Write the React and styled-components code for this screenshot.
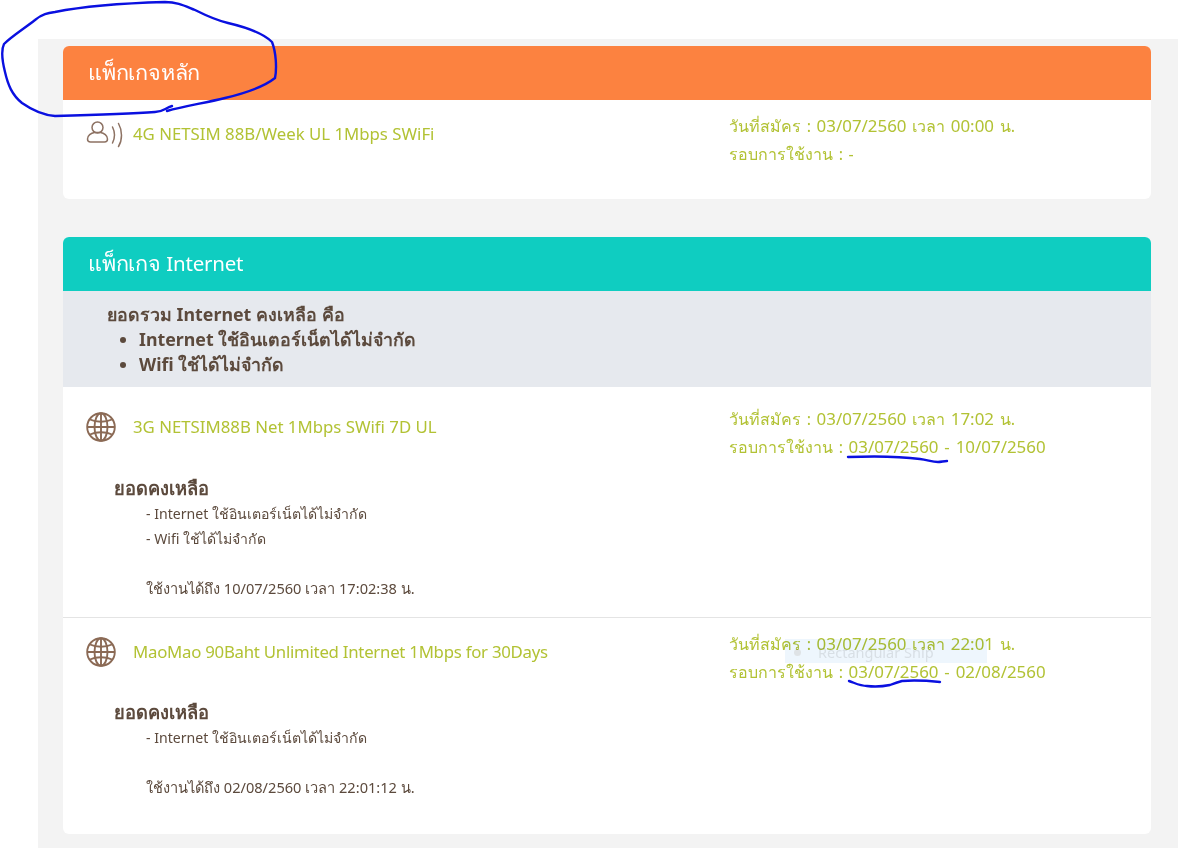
import React from "react";
import styled, { createGlobalStyle } from "styled-components";

const GlobalStyle = createGlobalStyle`
  html, body {
    margin: 0;
    background: #fff;
  }
  body {
    font-family: "Noto Sans", "Open Sans", "DejaVu Sans", "Noto Sans CJK SC", sans-serif;
    color: #5c4a3d;
  }
`;

const UserWaveIcon = () => (
  <svg width="38" height="28" viewBox="0 0 38 28" fill="none" stroke="#8d7263" strokeWidth="1.5" strokeLinecap="round">
    <circle cx="11.500" cy="7.500" r="5.500" />
    <path d="M1.500 19c0-3.500 3.500-6 7-6.500h6c3.500 .5 7 3 7 6.500c0 2-1 3-3 3h-14c-2 0-3-1-3-3z" />
    <path d="M26.500 7c2.500 5 2.500 11 0 16" />
    <path d="M32.500 3.500c4 7 4 16.500 0 23" />
  </svg>
);

const GlobeIcon = () => (
  <svg width="30" height="30" viewBox="0 0 30 30" fill="none" stroke="#8b6a55" strokeWidth="1.9">
    <circle cx="15" cy="15" r="13.800" />
    <ellipse cx="15" cy="15" rx="6.500" ry="13.800" />
    <path d="M15 1v28M1.500 15h27" />
    <path d="M4 7.500c6 3 16 3 22 0M4 22.500c6-3 16-3 22 0" />
  </svg>
);

const packages = [
  {
    name: "3G NETSIM88B Net 1Mbps SWifi 7D UL",
    time: "17:02",
    periodStart: "03/07/2560",
    periodEnd: "10/07/2560",
    lines: ["- Internet ใช้อินเตอร์เน็ตได้ไม่จำกัด", "- Wifi ใช้ได้ไม่จำกัด"],
    until: "ใช้งานได้ถึง 10/07/2560 เวลา 17:02:38 น.",
    top: 18,
    remainGap: 15,
    height: 230,
  },
  {
    name: "MaoMao 90Baht Unlimited Internet 1Mbps for 30Days",
    tight: true,
    time: "22:01",
    periodStart: "03/07/2560",
    periodEnd: "02/08/2560",
    lines: ["- Internet ใช้อินเตอร์เน็ตได้ไม่จำกัด"],
    until: "ใช้งานได้ถึง 02/08/2560 เวลา 22:01:12 น.",
    top: 12,
    remainGap: 14,
    height: 217,
  },
];

const AppliedLine = ({ time }) => (
  <div>
    วันที่สมัคร : <Num>03/07/2560</Num> เวลา <Num>{time}</Num> น.
  </div>
);

const App = () => {
  return (
    <>
      <GlobalStyle />
      <Page>
        <Panel>
          <Card>
            <CardHeader $color="#fc8240">แพ็กเกจหลัก</CardHeader>
            <MainRow>
              <NameCell>
                <IconSlot>
                  <UserWaveIcon />
                </IconSlot>
                <PackageName>4G NETSIM 88B/Week UL 1Mbps SWiFi</PackageName>
              </NameCell>
              <DateCell>
                <AppliedLine time="00:00" />
                <div>รอบการใช้งาน : -</div>
              </DateCell>
            </MainRow>
          </Card>

          <Card>
            <CardHeader $color="#0fcdc1">
              แพ็กเกจ <HeaderLatin>Internet</HeaderLatin>
            </CardHeader>
            <Summary>
              <div>ยอดรวม Internet คงเหลือ คือ</div>
              <SummaryList>
                <li>Internet ใช้อินเตอร์เน็ตได้ไม่จำกัด</li>
                <li>Wifi ใช้ได้ไม่จำกัด</li>
              </SummaryList>
            </Summary>
            {packages.map((item) => (
              <PackageRow key={item.name} $top={item.top} $height={item.height}>
                <PackageTop>
                  <NameCell>
                    <IconSlot>
                      <GlobeIcon />
                    </IconSlot>
                    <PackageName $tight={item.tight}>{item.name}</PackageName>
                  </NameCell>
                  <DateCell>
                    <AppliedLine time={item.time} />
                    <div>
                      รอบการใช้งาน : <Num>{item.periodStart} - {item.periodEnd}</Num>
                    </div>
                  </DateCell>
                </PackageTop>
                <Remain $gap={item.remainGap}>
                  <RemainTitle>ยอดคงเหลือ</RemainTitle>
                  {item.lines.map((line) => (
                    <RemainLine key={line}>{line}</RemainLine>
                  ))}
                  <Until>{item.until}</Until>
                </Remain>
              </PackageRow>
            ))}
          </Card>
        </Panel>

        <SnipGhost>
          <SnipDot />
          Rectangular Snip
        </SnipGhost>

        <Scribbles width="1178" height="848" viewBox="0 0 1178 848" fill="none" stroke="#0a10e0" strokeLinecap="round" strokeLinejoin="round">
          <path
            strokeWidth="2.400"
            d="M172 106C165 108 163 112 155 112C130 114 95 115 55 116C42 115 32 110 22 103C12 95 8 85 5 72C2 60 1 50 4 44C12 36 25 28 35 20C42 14 48 13 55 12C85 6 130 3 165 2C178 2 185 6 195 10C205 15 215 20 228 23C245 27 262 32 272 42C276 52 277 68 275 78C265 86 250 92 225 98C205 103 185 106 167 111"
          />
          <path strokeWidth="2.400" d="M848 457C875 456 905 457 920 459C928 460 932 462 938 462C941 462 944 461 947 461" />
          <path strokeWidth="2.400" d="M849 681C855 683 860 686 867 686C875 687 885 686 890 685C895 683 898 682 902 681C915 680 930 681 940 682" />
        </Scribbles>
      </Page>
    </>
  );
};

const Page = styled.div`
  position: relative;
  width: 1178px;
  height: 848px;
  overflow: hidden;
  padding-top: 39px;
  box-sizing: border-box;
  background: #fff;
`;

const Panel = styled.main`
  margin-left: 38px;
  height: 809px;
  background: #f3f3f3;
  padding: 7px 27px 0 25px;
  box-sizing: border-box;
  display: flex;
  flex-direction: column;
  gap: 38px;
`;

const Card = styled.section`
  background: #fff;
  border-radius: 6px;
  overflow: hidden;
`;

const CardHeader = styled.h2`
  margin: 0;
  height: 54px;
  padding-left: 25px;
  background: ${(props) => props.$color};
  color: #fff;
  font-size: 21.600px;
  font-weight: 400;
  line-height: 52px;
  letter-spacing: -0.2px;
`;

const HeaderLatin = styled.span`
  font-size: 20.500px;
`;

const MainRow = styled.div`
  height: 99px;
  display: flex;
  justify-content: space-between;
  padding: 12px 0 0 23px;
  box-sizing: border-box;
`;

const NameCell = styled.div`
  display: flex;
  align-items: center;
  height: 44px;
  gap: 9px;
`;

const IconSlot = styled.span`
  width: 38px;
  display: flex;
  align-items: center;
`;

const PackageName = styled.span`
  color: #b2c234;
  font-size: 16.800px;
  padding-bottom: 2px;
  letter-spacing: ${(props) => (props.$tight ? "-0.25px" : "0")};
`;

const DateCell = styled.div`
  width: 422px;
  color: #b2c234;
  font-size: 16px;
  line-height: 28px;
  word-spacing: 1.500px;
  white-space: nowrap;
`;

const Num = styled.span`
  font-size: 16.900px;
`;

const Summary = styled.div`
  height: 96px;
  background: #e6e9ee;
  padding: 11px 0 0 44px;
  box-sizing: border-box;
  color: #5c4a3d;
  font-size: 17.800px;
  font-weight: 700;
  line-height: 25px;
`;

const SummaryList = styled.ul`
  margin: 0;
  padding: 0 0 0 32px;
`;

const PackageRow = styled.article`
  height: ${(props) => props.$height}px;
  box-sizing: border-box;
  padding: ${(props) => props.$top}px 0 0 23px;
  & + & {
    border-top: 1px solid #e4e4e4;
  }
`;

const PackageTop = styled.div`
  display: flex;
  justify-content: space-between;
`;

const Remain = styled.div`
  margin-top: ${(props) => props.$gap}px;
  padding-left: 28px;
`;

const RemainTitle = styled.div`
  font-size: 18.300px;
  font-weight: 700;
  line-height: 23px;
  padding-bottom: 2px;
`;

const RemainLine = styled.div`
  padding-left: 32px;
  font-size: 14.100px;
  line-height: 25px;
`;

const Until = styled.div`
  margin-top: 25px;
  padding-left: 32px;
  font-size: 14.600px;
  line-height: 25px;
`;

const SnipGhost = styled.div`
  position: absolute;
  left: 785px;
  top: 639px;
  width: 202px;
  height: 24px;
  display: flex;
  align-items: center;
  gap: 17px;
  padding: 2px 0 0 9px;
  box-sizing: border-box;
  background: #eef6fd;
  color: #d8dfe5;
  font-size: 14.500px;
  mix-blend-mode: multiply;
`;

const SnipDot = styled.span`
  width: 7px;
  height: 7px;
  border-radius: 50%;
  background: #dfe3e6;
`;

const Scribbles = styled.svg`
  position: absolute;
  left: 0;
  top: 0;
  pointer-events: none;
`;

export default App;
